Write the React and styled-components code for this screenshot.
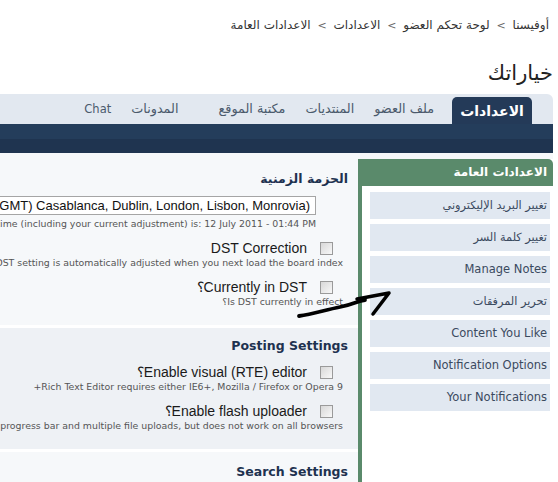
import styled, { createGlobalStyle } from "styled-components";

const GlobalStyle = createGlobalStyle`
  html, body {
    margin: 0;
    padding: 0;
    background: #ffffff;
    overflow: hidden;
  }
`;

const ui = `"DejaVu Sans", "Noto Sans", sans-serif`;
const arial = `"Liberation Sans", Arial, sans-serif`;

const tabs = [
  { label: "ملف العضو" },
  { label: "المنتديات" },
  { label: "مكتبة الموقع" },
  { label: "المدونات", wide: true },
  { label: "Chat", latin: true }
];

const menu = [
  { label: "تغيير البريد الإليكتروني" },
  { label: "تغيير كلمة السر" },
  { label: "Manage Notes", latin: true },
  { label: "تحرير المرفقات" },
  { label: "Content You Like", latin: true },
  { label: "Notification Options", latin: true },
  { label: "Your Notifications", latin: true }
];

function Option({ label, hint }) {
  return (
    <OptionBlock>
      <OptionRow>
        <Check type="checkbox" />
        <OptionLabel>{label}</OptionLabel>
      </OptionRow>
      <Hint>{hint}</Hint>
    </OptionBlock>
  );
}

export default function App() {
  return (
    <Page dir="rtl">
      <GlobalStyle />
      <Breadcrumb>
        أوفيسنا <Sep>&lt;</Sep> لوحة تحكم العضو <Sep>&lt;</Sep> الاعدادات{" "}
        <Sep>&lt;</Sep> الاعدادات العامة
      </Breadcrumb>
      <Title>خياراتك</Title>

      <TabBar>
        <ActiveTab>الاعدادات</ActiveTab>
        {tabs.map(t => (
          <Tab key={t.label} $wide={t.wide} $latin={t.latin}>
            {t.label}
          </Tab>
        ))}
      </TabBar>
      <NavStrip />

      <Main>
        <Sidebar>
          <SideHeader>الاعدادات العامة</SideHeader>
          <SideList>
            {menu.map(m => (
              <SideItem key={m.label} $latin={m.latin}>
                {m.label}
              </SideItem>
            ))}
          </SideList>
        </Sidebar>

        <Content>
          <Section $bg="#f6f8fa" $top={17} $height={172}>
            <SectionTitle>الحزمة الزمنية</SectionTitle>
            <SelectBox>
              <Forced>(GMT) Casablanca, Dublin, London, Lisbon, Monrovia)</Forced>
            </SelectBox>
            <Hint $right={32} $gap={2}>
              Your current time (including your current adjustment) is: 12 July 2011 - 01:44 PM
            </Hint>
            <Option
              label="DST Correction"
              hint="Your DST setting is automatically adjusted when you next load the board index"
            />
            <Option label="Currently in DST؟" hint="Is DST currently in effect؟" />
          </Section>

          <Section $bg="#eef1f5" $top={9} $height={121}>
            <SectionTitle>Posting Settings</SectionTitle>
            <Option
              label="Enable visual (RTE) editor؟"
              hint="Rich Text Editor requires either IE6+, Mozilla / Firefox or Opera 9+"
            />
            <Option
              label="Enable flash uploader؟"
              hint="Flash uploader shows a progress bar and multiple file uploads, but does not work on all browsers"
            />
          </Section>

          <Section $bg="#f6f8fa" $top={11} $height={60}>
            <SectionTitle>Search Settings</SectionTitle>
          </Section>
        </Content>
      </Main>

      <Arrow viewBox="0 0 100 32" fill="none">
        <path
          d="M4 28 C 18 26, 30 22, 45 19 S 62 13, 70 12"
          stroke="#000"
          strokeWidth="3.8"
          strokeLinecap="round"
        />
        <path
          d="M62 11 L 94 5 L 78 26"
          stroke="#000"
          strokeWidth="3.5"
          strokeLinecap="round"
          strokeLinejoin="round"
        />
      </Arrow>
    </Page>
  );
}

const Page = styled.div`
  position: relative;
  width: 553px;
  height: 482px;
  overflow: hidden;
  direction: rtl;
  font-family: ${ui};
  color: #333;
`;

const Breadcrumb = styled.div`
  padding: 17px 4px 0 0;
  font-size: 12px;
  line-height: 16px;
  color: #333;
  white-space: nowrap;
`;

const Sep = styled.span`
  direction: ltr;
  unicode-bidi: isolate;
  color: #666;
  font-size: 11px;
  padding: 0 3px;
`;

const Title = styled.h1`
  margin: 26px 0 0;
  font-family: ${ui};
  font-weight: normal;
  font-size: 21px;
  line-height: 26px;
  color: #222;
`;

const TabBar = styled.div`
  margin-top: 8px;
  height: 30px;
  background: #e2e8f0;
  border-top-right-radius: 6px;
  display: flex;
  align-items: flex-end;
  padding-right: 21px;
`;

const ActiveTab = styled.div`
  width: 80px;
  height: 27px;
  line-height: 28px;
  text-align: center;
  background: #243a58;
  color: #fff;
  font-weight: bold;
  font-size: 14px;
  border-radius: 5px 5px 0 0;
  margin-left: 8px;
`;

const Tab = styled.div`
  height: 30px;
  line-height: 30px;
  padding: 0 10px;
  margin-right: ${p => (p.$wide ? "20px" : "0")};
  font-size: ${p => (p.$latin ? "11.5px" : "12.8px")};
  color: #4b5a6c;
  white-space: nowrap;
`;

const NavStrip = styled.div`
  height: 29px;
  background: linear-gradient(#243d5b 0, #243d5b 15px, #1f3450 15px, #1f3450 100%);
`;

const Main = styled.div`
  display: flex;
  background: #f6f8fa;
  height: 330px;
`;

const Sidebar = styled.aside`
  width: 191px;
  flex-shrink: 0;
  margin-top: 6px;
  background: #fff;
  border-left: 4px solid #5a8a6b;
`;

const SideHeader = styled.div`
  height: 27px;
  line-height: 27px;
  padding-right: 6px;
  background: #5a8a6b;
  border-top-right-radius: 5px;
  color: #fff;
  font-weight: bold;
  font-size: 12px;
`;

const SideList = styled.div`
  display: flex;
  flex-direction: column;
  gap: 5px;
  padding: 6px 3px 0 8px;
`;

const SideItem = styled.div`
  height: 27px;
  line-height: 27px;
  padding-right: 3px;
  background: #e1e8f1;
  color: #3b4a5f;
  font-size: ${p => (p.$latin ? "11.5px" : "11.3px")};
  white-space: nowrap;
`;

const Content = styled.div`
  flex: 1;
  min-width: 0;
  overflow: hidden;
  background: #fff;
  display: flex;
  flex-direction: column;
  gap: 3px;
`;

const Section = styled.section`
  flex-shrink: 0;
  box-sizing: border-box;
  height: ${p => p.$height}px;
  background: ${p => p.$bg};
  padding: ${p => p.$top}px 10px 0 0;
`;

const SectionTitle = styled.h3`
  margin: 0;
  font-family: ${ui};
  font-size: 12.5px;
  line-height: 18px;
  font-weight: bold;
  color: #1e3250;
  white-space: nowrap;
`;

const SelectBox = styled.div`
  margin: 8px 32px 0 0;
  height: 19px;
  line-height: 18px;
  box-sizing: border-box;
  border: 1px solid #a5a5a5;
  background: #fff;
  padding-right: 5px;
  font-family: ${arial};
  font-size: 13px;
  color: #111;
  white-space: nowrap;
  width: 600px;
`;

const Forced = styled.span`
  direction: ltr;
  unicode-bidi: bidi-override;
`;

const OptionBlock = styled.div`
  margin-top: 9px;
`;

const OptionRow = styled.div`
  display: flex;
  align-items: center;
  gap: 13px;
  padding-right: 15px;
  height: 16px;
`;

const Check = styled.input`
  appearance: none;
  margin: 0;
  width: 13px;
  height: 13px;
  flex-shrink: 0;
  box-sizing: border-box;
  border: 1px solid #9a9a9a;
  background: linear-gradient(135deg, #d8d8d8, #f8f8f8);
`;

const OptionLabel = styled.span`
  font-family: ${arial};
  font-size: 14px;
  color: #1a1a1a;
  white-space: nowrap;
`;

const Hint = styled.div`
  margin-top: ${p => (p.$gap != null ? p.$gap : 0)}px;
  padding-right: ${p => (p.$right != null ? p.$right : 5)}px;
  font-size: 9.4px;
  line-height: 14px;
  color: #555;
  white-space: nowrap;
`;

const Arrow = styled.svg`
  position: absolute;
  left: 295px;
  top: 288px;
  width: 100px;
  height: 32px;
`;
